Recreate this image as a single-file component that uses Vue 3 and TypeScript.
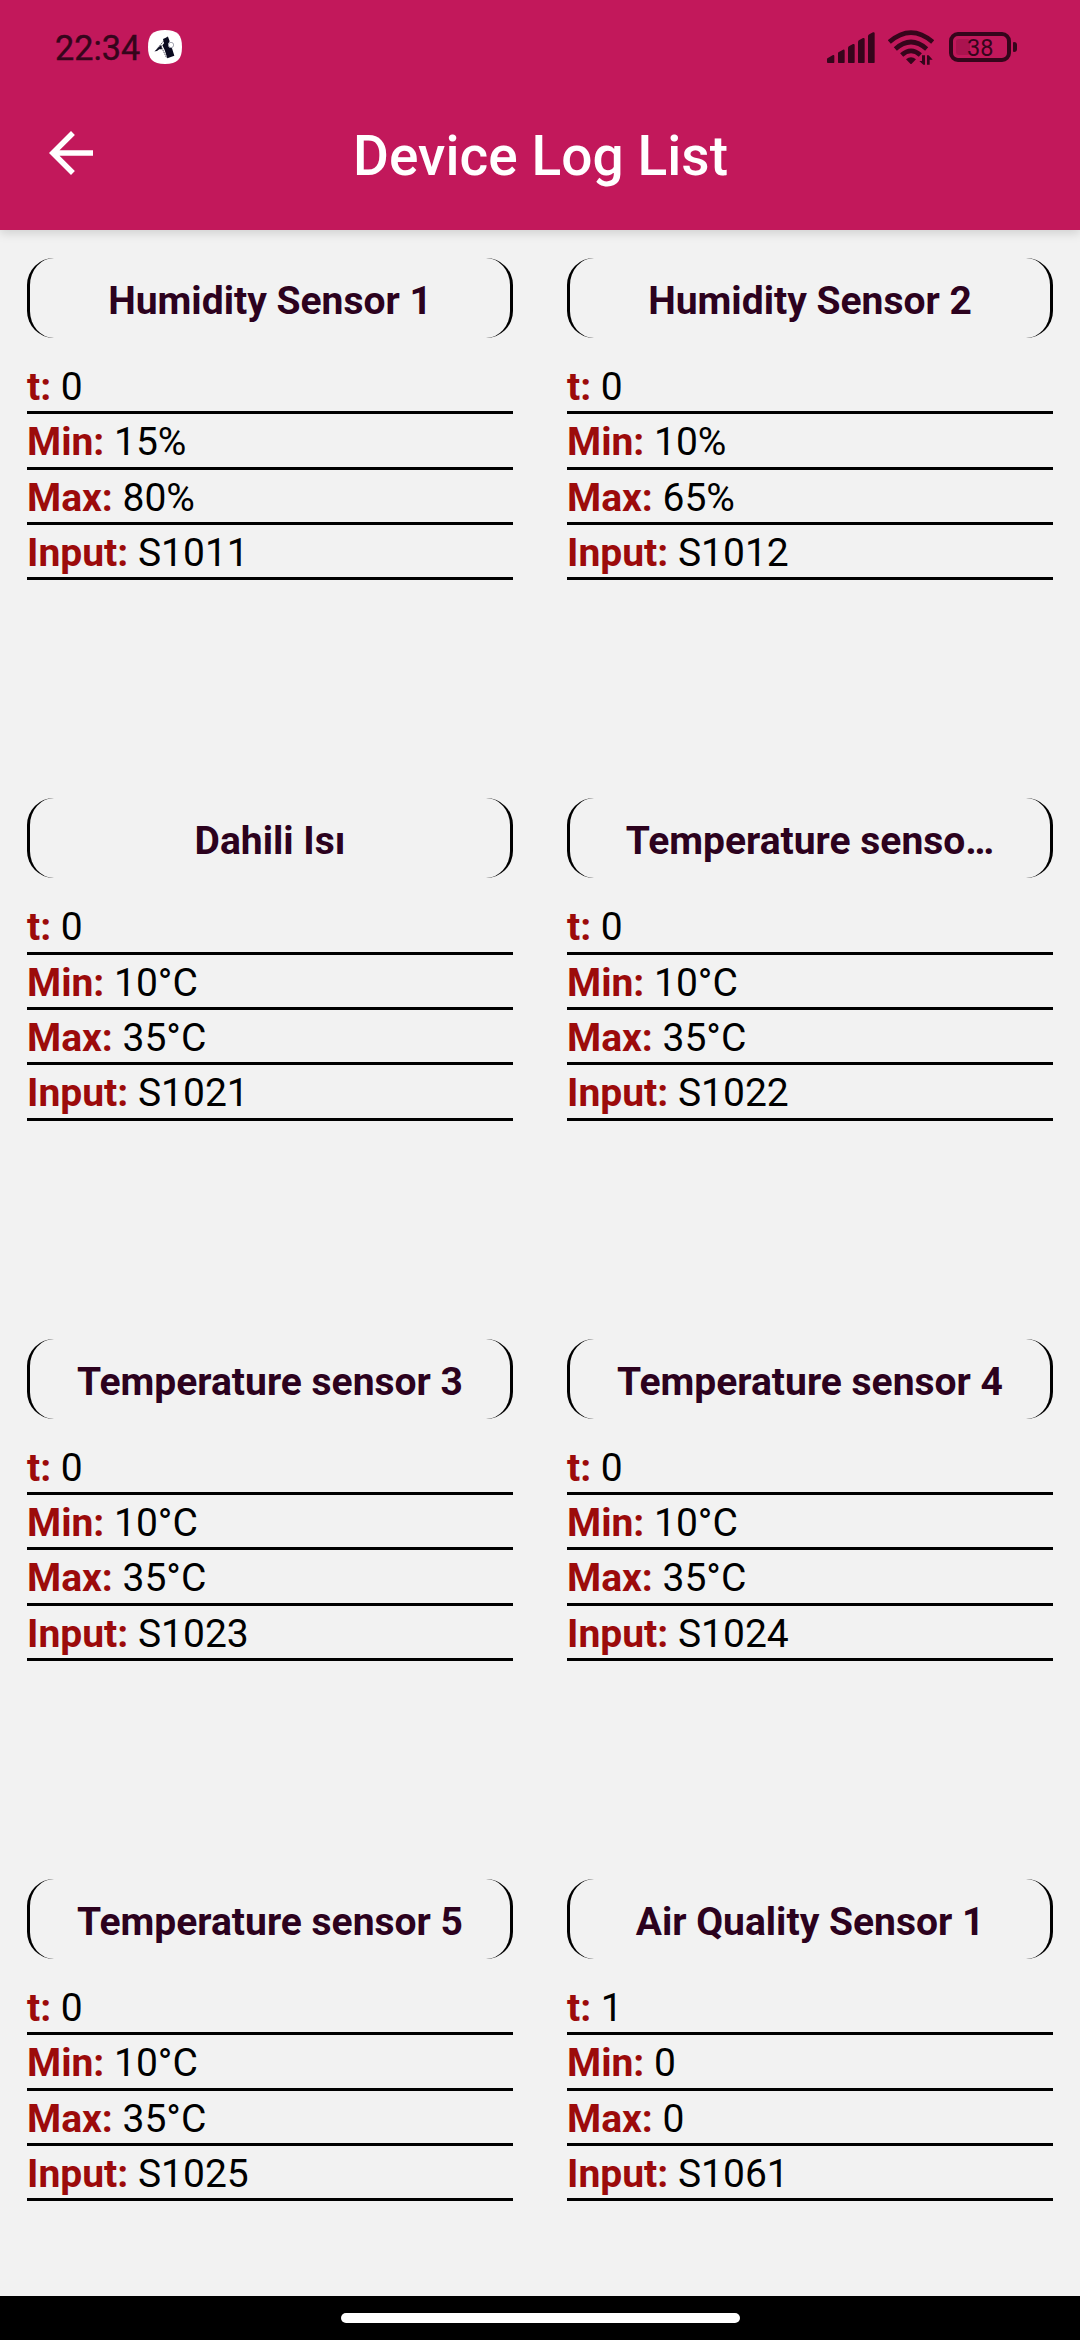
<script setup lang="ts">
interface Reading {
  label: string
  value: string
}

interface Device {
  name: string
  readings: Reading[]
}

function device(name: string, t: string, min: string, max: string, input: string): Device {
  return {
    name,
    readings: [
      { label: 't:', value: t },
      { label: 'Min:', value: min },
      { label: 'Max:', value: max },
      { label: 'Input:', value: input },
    ],
  }
}

const devices: Device[] = [
  device('Humidity Sensor 1', '0', '15%', '80%', 'S1011'),
  device('Humidity Sensor 2', '0', '10%', '65%', 'S1012'),
  device('Dahili Isı', '0', '10°C', '35°C', 'S1021'),
  device('Temperature senso…', '0', '10°C', '35°C', 'S1022'),
  device('Temperature sensor 3', '0', '10°C', '35°C', 'S1023'),
  device('Temperature sensor 4', '0', '10°C', '35°C', 'S1024'),
  device('Temperature sensor 5', '0', '10°C', '35°C', 'S1025'),
  device('Air Quality Sensor 1', '1', '0', '0', 'S1061'),
]
</script>

<template>
  <div class="screen">
    <header class="header">
      <div class="status">
        <span class="clock">22:34</span>
        <svg class="app-badge" viewBox="0 0 102 102">
          <path d="M51 0C88 0 102 14 102 51S88 102 51 102 0 88 0 51 14 0 51 0Z" fill="#fff" />
          <path d="M45 27l15-7 5 14-5 8 3 10 9 3 7 22-21 8-8-25-7-14 5-6z" fill="#0b0b20" />
          <path d="M21 64l12-14 7-4 2 12-8 0-7 5z" fill="#0b0b20" />
          <path d="M21 64L58 20M38 46l18 38" stroke="#0b0b20" stroke-width="2" stroke-dasharray="5 2" fill="none" />
          <circle cx="69" cy="45" r="8" fill="#fff" stroke="#55586c" stroke-width="1.5" />
        </svg>
        <span class="spacer"></span>
        <svg class="signal" viewBox="0 0 144 93" fill="#35051b">
          <path d="M0 91V82q0-4 4-5l14-8q4-1 4 3v19q0 2-2 2H3q-3 0-3-2z" />
          <path d="M33 91V64q0-4 4-5l11-6q5-1 5 3v35q0 2-2 2H35q-2 0-2-2z" />
          <path d="M63 91V48q0-4 4-6l11-6q5-1 5 3v52q0 2-2 2H65q-2 0-2-2z" />
          <path d="M93 91V30q0-4 4-6l11-6q5-1 5 3v70q0 2-2 2H95q-2 0-2-2z" />
          <path d="M123 91V13q0-4 4-6l11-6q5-1 5 3v87q0 2-2 2h-16q-2 0-2-2z" />
        </svg>
        <svg class="wifi" viewBox="0 0 138 105">
          <g fill="none" stroke="#35051b" stroke-width="14">
            <path d="M4 36Q69-20 134 36" />
            <path d="M22 57Q69 15 116 57" />
            <path d="M41 75Q69 50 97 75" />
          </g>
          <path d="M54 88q15-12 30 0L71 101q-2 2-4 0z" fill="#35051b" />
          <path d="M94 93h8V76h9v28h-5zM117 104V76h5l12 13h-9v15z" fill="#35051b" />
        </svg>
        <span class="battery"><span class="charge"></span><span class="level">38</span></span>
        <span class="nub"></span>
      </div>
      <div class="toolbar">
        <svg class="back" viewBox="0 0 24 24">
          <path d="M20 11H7.83l5.59-5.59L12 4l-8 8 8 8 1.41-1.41L7.83 13H20v-2z" fill="#fff" />
        </svg>
        <h1 class="title">Device Log List</h1>
      </div>
    </header>

    <main class="grid">
      <section v-for="d in devices" :key="d.name" class="card">
        <h2 class="name">{{ d.name }}</h2>
        <p v-for="r in d.readings" :key="r.label" class="reading">
          <b class="label">{{ r.label }}</b> {{ r.value }}
        </p>
      </section>
    </main>

    <footer class="nav"><span class="handle"></span></footer>
  </div>
</template>

<style>
body {
  margin: 0;
  background: #f2f2f2;
}
</style>

<style scoped>
.screen {
  display: flex;
  flex-direction: column;
  width: 1080px;
  height: 2340px;
  overflow: hidden;
  background: #f2f2f2;
  font-family: Roboto, sans-serif;
  box-sizing: border-box;
}
.header {
  flex: none;
  height: 230px;
  background: #c2185b;
  box-shadow: 0 3px 10px rgba(0, 0, 0, 0.15);
}
.status {
  display: flex;
  align-items: center;
  height: 84px;
  padding: 10px 63px 0 55px;
  box-sizing: border-box;
}
.clock {
  width: 93px;
  color: #35051b;
  font-size: 34.2px;
  line-height: 40px;
  padding-top: 2px;
  box-sizing: border-box;
  white-space: nowrap;
  -webkit-text-stroke: 0.4px #35051b;
}
.app-badge {
  width: 34px;
  height: 34px;
}
.spacer {
  flex: 1;
}
.signal {
  width: 48px;
  height: 31px;
  margin-right: 13px;
}
.wifi {
  width: 46px;
  height: 35px;
  margin-right: 15px;
}
.battery {
  display: flex;
  align-items: center;
  width: 62px;
  height: 30px;
  padding-left: 3px;
  border: 4px solid #35051b;
  border-radius: 9px;
  box-sizing: border-box;
}
.charge {
  width: 14px;
  height: 16px;
  border-radius: 3px;
  background: #ab134f;
}
.level {
  margin: 2px 0 0 -3px;
  color: #35051b;
  font-size: 23.5px;
  line-height: 22px;
}
.nub {
  width: 4px;
  height: 10px;
  margin-left: 2px;
  border-radius: 1px 3px 3px 1px;
  background: #35051b;
}
.toolbar {
  display: grid;
  grid-template-columns: 104px 1fr 104px;
  align-items: center;
  height: 146px;
  padding-bottom: 8px;
  box-sizing: border-box;
}
.back {
  width: 66px;
  height: 66px;
  margin-left: 38px;
}
.title {
  margin: 5px 0 0 1px;
  color: #fff;
  font-size: 55px;
  font-weight: 500;
  line-height: 64px;
  letter-spacing: 0.05px;
  text-align: center;
}
.grid {
  flex: 1;
  display: grid;
  grid-template-columns: 540px 540px;
  grid-auto-rows: 540.3px;
  min-height: 0;
  overflow: hidden;
  clip-path: inset(12px 0 0 0);
}
.card {
  padding: 28px 27px 0;
}
.name {
  height: 80px;
  margin: 0 0 21px;
  border: 0 solid #000;
  border-width: 0 3px;
  border-radius: 27px;
  box-sizing: border-box;
  color: #2c021e;
  font-size: 39px;
  font-weight: 700;
  line-height: 86px;
  text-align: center;
  white-space: nowrap;
}
.reading {
  height: 55.35px;
  margin: 0;
  border-bottom: 3px solid #000;
  box-sizing: border-box;
  color: #000;
  font-size: 39px;
  line-height: 57.2px;
  white-space: nowrap;
}
.label {
  color: #9c0b0b;
  font-weight: 700;
}
.nav {
  flex: none;
  display: flex;
  justify-content: center;
  height: 44px;
  padding-top: 17px;
  background: #000;
  box-sizing: border-box;
}
.handle {
  width: 399px;
  height: 10px;
  border-radius: 5px;
  background: #fff;
}
</style>
